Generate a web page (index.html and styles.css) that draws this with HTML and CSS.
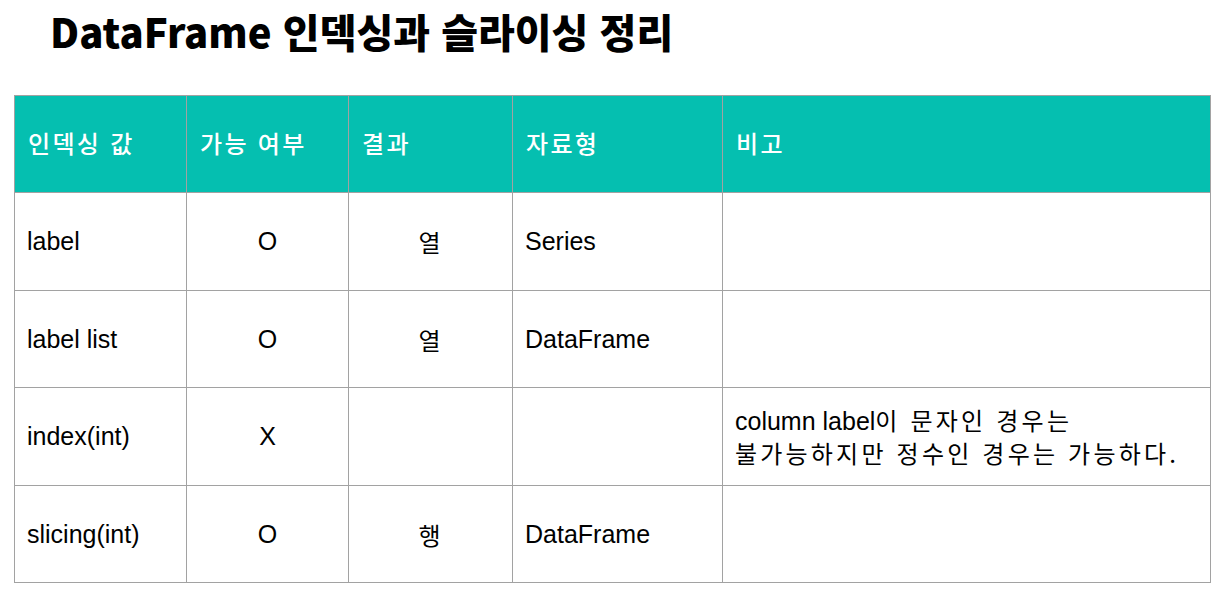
FILE: index.html
```html
<!DOCTYPE html>
<html lang="ko">
<head>
<meta charset="utf-8">
<link rel="stylesheet" href="styles.css">
</head>
<body>
<h1 class="title">DataFrame 인덱싱과 슬라이싱 정리</h1>
<table class="grid">
  <colgroup>
    <col class="c1"><col class="c2"><col class="c3"><col class="c4"><col class="c5">
  </colgroup>
  <thead>
    <tr class="head">
      <th>인덱싱 값</th><th>가능 여부</th><th>결과</th><th>자료형</th><th>비고</th>
    </tr>
  </thead>
  <tbody>
    <tr class="tall">
      <td>label</td><td class="ctr">O</td><td class="ctr ko">열</td><td>Series</td><td></td>
    </tr>
    <tr>
      <td>label list</td><td class="ctr">O</td><td class="ctr ko">열</td><td>DataFrame</td><td></td>
    </tr>
    <tr class="tall">
      <td>index(int)</td><td class="ctr">X</td><td></td><td></td>
      <td class="note">column label<span class="ko wide">이 문자인 경우는</span><br><span class="ko wide">불가능하지만 정수인 경우는 가능하다.</span></td>
    </tr>
    <tr>
      <td>slicing(int)</td><td class="ctr">O</td><td class="ctr ko">행</td><td>DataFrame</td><td></td>
    </tr>
  </tbody>
</table>
</body>
</html>
```
FILE: styles.css
```css
html, body {
  margin: 0;
  padding: 0;
  background: #ffffff;
}
body {
  width: 1230px;
  height: 605px;
  overflow: hidden;
}
.title {
  margin: 0;
  padding: 3px 0 0 50px;
  height: 95px;
  box-sizing: border-box;
  font-family: "Noto Sans CJK KR", "Noto Sans", sans-serif;
  font-weight: 900;
  font-size: 40px;
  line-height: 56px;
  color: #000;
}
.grid {
  margin-left: 14px;
  border-collapse: collapse;
  table-layout: fixed;
  width: 1196px;
  font-family: "Liberation Sans", Arial, "Noto Sans CJK KR", sans-serif;
  font-size: 25px;
  color: #000;
}
.c1 { width: 172px; }
.c2 { width: 162px; }
.c3 { width: 164px; }
.c4 { width: 210px; }
.c5 { width: 488px; }
.grid th, .grid td {
  border: 1px solid #a2a2a2;
  padding: 0 12px;
  vertical-align: middle;
  text-align: left;
}
.head th {
  height: 92px;
  padding-bottom: 4px;
  background: #05bfb0;
  color: #ffffff;
  font-family: "Noto Sans CJK KR", sans-serif;
  font-weight: 500;
  font-size: 24px;
  letter-spacing: 2.3px;
  padding-left: 13px;
}
.grid td {
  height: 96px;
}
.grid tr.tall td {
  height: 97px;
}
.grid td.ctr {
  text-align: center;
}
.ko {
  font-family: "Noto Sans CJK KR", sans-serif;
  font-size: 24px;
  font-weight: 400;
  letter-spacing: 2px;
}
.ko.wide {
  letter-spacing: 3.2px;
}
.note {
  line-height: 31px;
}
```
